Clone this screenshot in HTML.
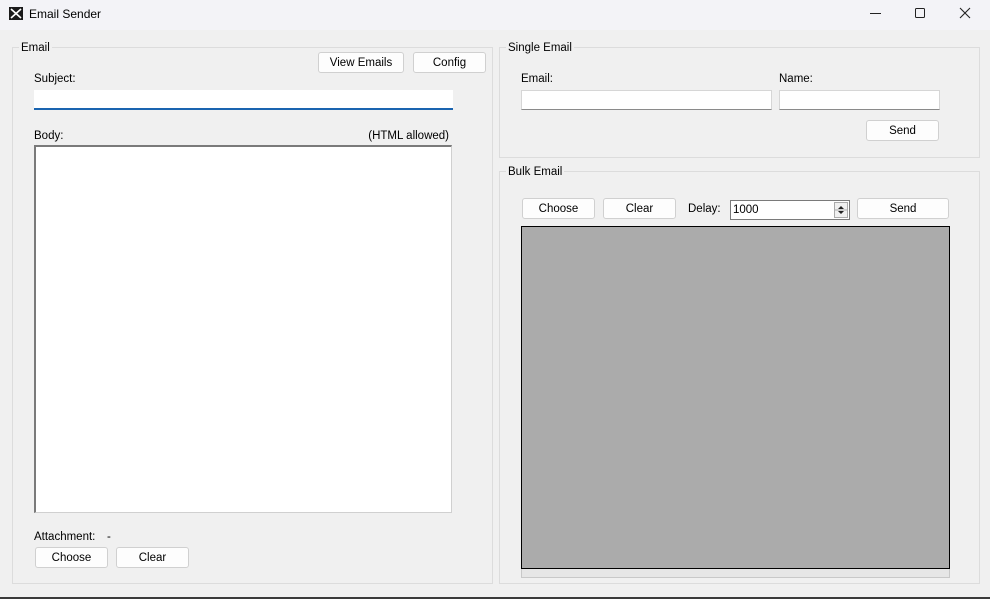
<!DOCTYPE html>
<html><head><meta charset="utf-8"><style>
*{box-sizing:border-box;margin:0;padding:0}
body{width:990px;height:599px;background:#f0f0f0;font-family:"Liberation Sans",sans-serif;font-size:11.5px;color:#000;position:relative;overflow:hidden}
.a{position:absolute}
.title{left:0;top:0;width:990px;height:30px;background:#f3f3f7}
.grp{border:1px solid #dcdcdc}
.lbl{background:#f0f0f0;padding:0 2px;line-height:14px}
.btn{background:#fdfdfd;border:1px solid #d0d0d0;border-radius:3px;text-align:center;line-height:20px}
.inp{background:#fff;border:1px solid #d6d6d6;border-bottom:1px solid #8a8a8a}
.t{line-height:14px}
</style></head><body>
<div class="a title"></div>
<svg class="a" style="left:9px;top:7px" width="14" height="13"><rect width="14" height="13" fill="#1a1a1a"/><path d="M2 2 L7 6.5 L12 2 M2 11 L7 6.5 L12 11" stroke="#fff" stroke-width="1.6" fill="none"/></svg>
<div class="a t" style="left:29px;top:7px;font-size:12px">Email Sender</div>
<svg class="a" style="left:860px;top:5px" width="120" height="18"><line x1="10" y1="8.5" x2="21" y2="8.5" stroke="#222" stroke-width="1"/><rect x="55.5" y="3.5" width="9" height="9" rx="1" fill="none" stroke="#222"/><path d="M100 3 L110 13 M110 3 L100 13" stroke="#222" stroke-width="1.1"/></svg>
<div class="a" style="left:0;top:597px;width:990px;height:2px;background:#3a3a3a"></div>

<div class="a grp" style="left:12px;top:47px;width:481px;height:537px"></div>
<div class="a lbl" style="left:19px;top:41px">Email</div>
<div class="a btn" style="left:318px;top:52px;width:86px;height:21px">View Emails</div>
<div class="a btn" style="left:413px;top:52px;width:73px;height:21px">Config</div>
<div class="a t" style="left:34px;top:72px">Subject:</div>
<div class="a" style="left:34px;top:90px;width:419px;height:20px;background:#fff;border-bottom:2px solid #1a64b0"></div>
<div class="a t" style="left:34px;top:129px">Body:</div>
<div class="a t" style="left:360px;top:129px;width:89px;text-align:right">(HTML allowed)</div>
<div class="a" style="left:34px;top:145px;width:418px;height:368px;background:#fff;border:1px solid #d0d0d0;border-top:2px solid #7a7a7a;border-left:2px solid #7a7a7a"></div>
<div class="a t" style="left:34px;top:530px">Attachment:</div>
<div class="a t" style="left:107px;top:530px">-</div>
<div class="a btn" style="left:35px;top:547px;width:73px;height:21px">Choose</div>
<div class="a btn" style="left:116px;top:547px;width:73px;height:21px">Clear</div>

<div class="a grp" style="left:499px;top:47px;width:481px;height:111px"></div>
<div class="a lbl" style="left:506px;top:41px">Single Email</div>
<div class="a t" style="left:521px;top:72px">Email:</div>
<div class="a inp" style="left:521px;top:90px;width:251px;height:20px"></div>
<div class="a t" style="left:779px;top:72px">Name:</div>
<div class="a inp" style="left:779px;top:90px;width:161px;height:20px"></div>
<div class="a btn" style="left:866px;top:120px;width:73px;height:21px">Send</div>

<div class="a grp" style="left:499px;top:171px;width:481px;height:413px"></div>
<div class="a lbl" style="left:506px;top:165px">Bulk Email</div>
<div class="a btn" style="left:522px;top:198px;width:73px;height:21px">Choose</div>
<div class="a btn" style="left:603px;top:198px;width:73px;height:21px">Clear</div>
<div class="a t" style="left:688px;top:202px">Delay:</div>
<div class="a" style="left:730px;top:200px;width:120px;height:20px;background:#fff;border:1px solid #7a7a7a;padding:1px 2px;line-height:16px">1000</div>
<div class="a" style="left:834px;top:202px;width:14px;height:16px;background:#f0f0f0;border:1px solid #aaa"></div>
<svg class="a" style="left:834px;top:202px" width="14" height="16"><path d="M4 7 L7 4 L10 7Z M4 9 L7 12 L10 9Z" fill="#222"/><line x1="1" y1="8" x2="13" y2="8" stroke="#aaa"/></svg>
<div class="a btn" style="left:857px;top:198px;width:92px;height:21px">Send</div>
<div class="a" style="left:521px;top:226px;width:429px;height:343px;background:#ababab;border:1px solid #000"></div>
<div class="a" style="left:521px;top:569px;width:429px;height:9px;background:#e6e6e6;border:1px solid #c8c8c8;border-top:none"></div>
</body></html>
